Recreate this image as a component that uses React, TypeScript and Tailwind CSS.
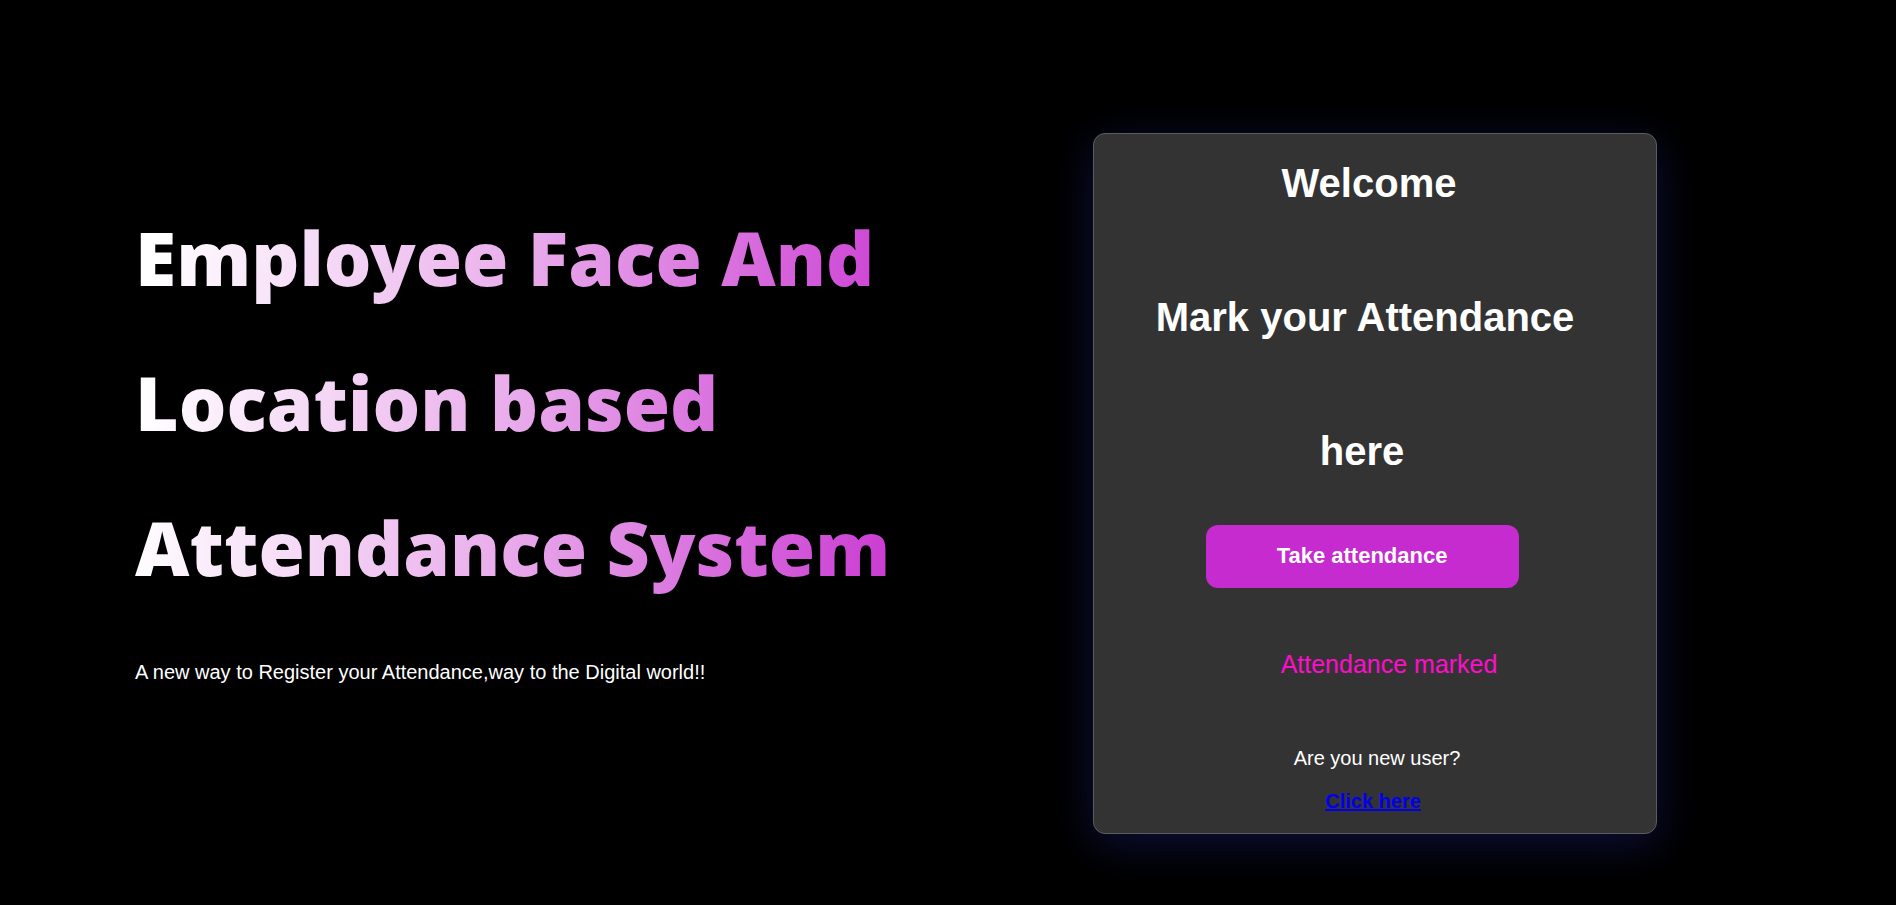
export default function App() {
  return (
    <main className="flex min-h-screen items-start bg-black font-['Liberation_Sans',Arial,sans-serif] text-white">
      <section className="w-[57.65%] pt-[185px] pl-[135px]">
        <h1 className="w-fit bg-[linear-gradient(95deg,#ffffff_3%,#eab0ec_45%,#c62bcf_100%)] bg-clip-text pr-14 font-['Noto_Sans','Open_Sans',sans-serif] text-[75px] leading-[145px] font-black text-transparent">
          Employee Face And
          <br />
          Location based
          <br />
          Attendance System
        </h1>
        <p className="mt-[37px] text-xl leading-[30px]">
          A new way to Register your Attendance,way to the Digital world!!
        </p>
      </section>

      <section className="mt-[133px] w-[564px] rounded-xl border border-[#5b5b60] bg-[#333333] pb-[17px] text-center shadow-[0_10px_44px_rgba(31,38,135,0.42)]">
        <h2 className="-mt-[18px] text-[40px] leading-[134px] font-bold">
          <span className="block pr-3">Welcome</span>
          <span className="block pr-5">Mark your Attendance</span>
          <span className="block pr-[26px]">here</span>
        </h2>
        <div className="mt-[7px] pr-[26px]">
          <button
            type="button"
            className="h-[63px] w-[313px] rounded-xl bg-[#c62bcf] pb-0.5 text-[22px] font-bold"
          >
            Take attendance
          </button>
        </div>
        <p className="mt-[60px] pl-7 text-[25px] leading-[32px] text-[#ff0dcc]">Attendance marked</p>
        <p className="mt-[63px] pl-1 text-xl leading-[30px]">Are you new user?</p>
        <p className="mt-[13px] pr-1 text-xl leading-[30px]">
          <a href="#register" className="font-bold text-[#0000ee] underline">
            Click here
          </a>
        </p>
      </section>
    </main>
  );
}
